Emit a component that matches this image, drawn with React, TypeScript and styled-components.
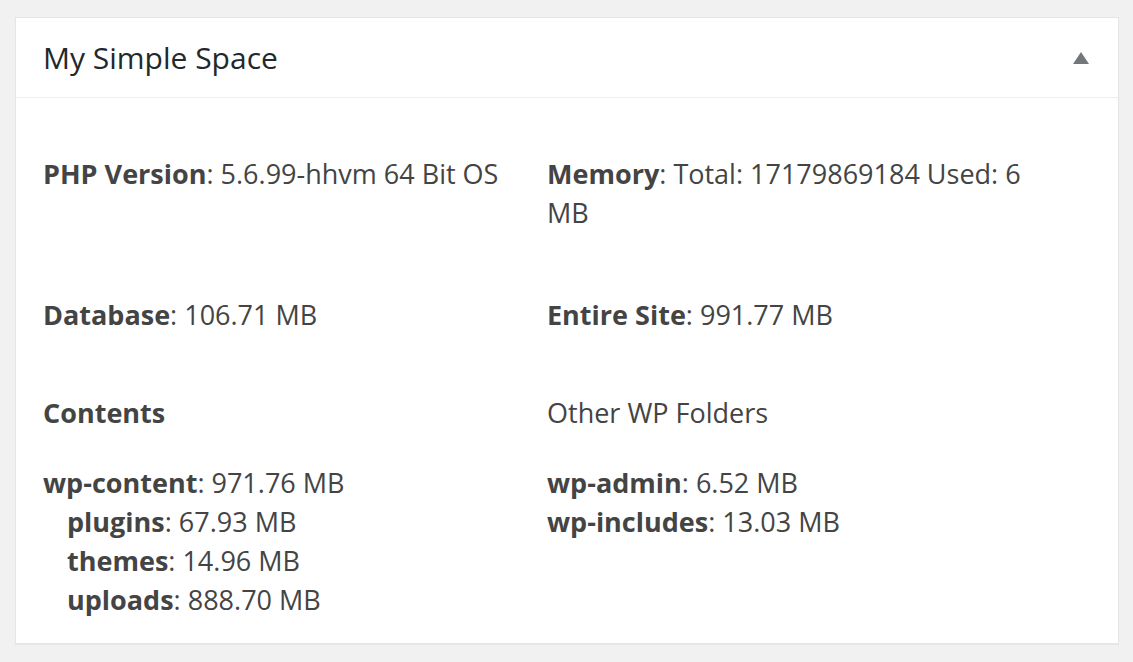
import styled, { createGlobalStyle } from 'styled-components';

const GlobalStyle = createGlobalStyle`
  html, body {
    margin: 0;
    padding: 0;
    background: #f1f1f1;
  }
  body {
    font-family: "Open Sans", "Noto Sans", sans-serif;
    color: #444;
  }
`;

const Page = styled.div`
  padding: 17px 14px 17px 15px;
`;

const Card = styled.section`
  background: #fff;
  border: 1px solid #e5e5e5;
  box-shadow: 0 1px 1px rgba(0, 0, 0, 0.04);
`;

const Header = styled.header`
  display: flex;
  align-items: center;
  justify-content: space-between;
  height: 79px;
  padding: 0 28px 0 27px;
  border-bottom: 1px solid #eee;
`;

const Title = styled.h2`
  margin: 0;
  font-size: 30px;
  font-weight: 400;
  color: #23282d;
`;

const Toggle = styled.button`
  border: 0;
  background: none;
  padding: 0;
  width: 18px;
  height: 14px;
  cursor: pointer;
  display: flex;
`;

const Body = styled.div`
  padding: 56px 27px 24px;
`;

const Row = styled.div<{ $gap?: number }>`
  display: grid;
  grid-template-columns: 504px 500px;
  margin-top: ${(p) => p.$gap ?? 0}px;
`;

const Line = styled.div<{ $indent?: boolean }>`
  font-size: 27px;
  line-height: 39px;
  padding-left: ${(p) => (p.$indent ? 24 : 0)}px;

  b {
    font-weight: 700;
  }
`;

const Heading = styled.h3<{ $bold?: boolean }>`
  margin: 0 0 31px;
  font-size: 27px;
  line-height: 39px;
  font-weight: ${(p) => (p.$bold ? 700 : 400)};
  color: #444;
`;

const Item = ({ label, value, indent }: { label: string; value: string; indent?: boolean }) => (
  <Line $indent={indent}>
    <b>{label}</b>: {value}
  </Line>
);

const App = () => {
  return (
    <Page>
      <GlobalStyle />
      <Card>
        <Header>
          <Title>My Simple Space</Title>
          <Toggle aria-label="Toggle panel">
            <svg width="18" height="14" viewBox="0 0 18 14">
              <path d="M9 1 L17 13 H1 Z" fill="#72777c" />
            </svg>
          </Toggle>
        </Header>
        <Body>
          <Row>
            <Item label="PHP Version" value="5.6.99-hhvm 64 Bit OS" />
            <Item label="Memory" value="Total: 17179869184 Used: 6 MB" />
          </Row>
          <Row $gap={63}>
            <Item label="Database" value="106.71 MB" />
            <Item label="Entire Site" value="991.77 MB" />
          </Row>
          <Row $gap={59}>
            <div>
              <Heading $bold>Contents</Heading>
              <Item label="wp-content" value="971.76 MB" />
              <Item label="plugins" value="67.93 MB" indent />
              <Item label="themes" value="14.96 MB" indent />
              <Item label="uploads" value="888.70 MB" indent />
            </div>
            <div>
              <Heading>Other WP Folders</Heading>
              <Item label="wp-admin" value="6.52 MB" />
              <Item label="wp-includes" value="13.03 MB" />
            </div>
          </Row>
        </Body>
      </Card>
    </Page>
  );
};

export default App;
